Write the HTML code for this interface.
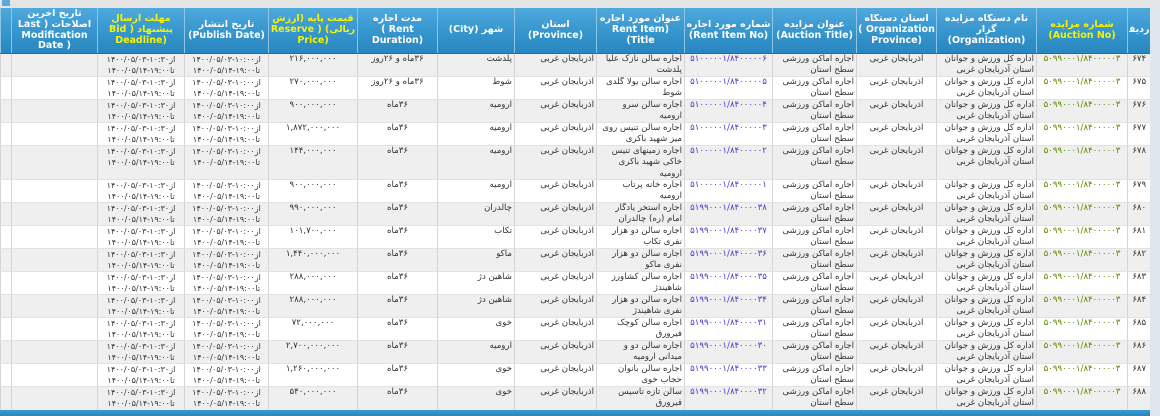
<!DOCTYPE html>
<html><head><meta charset="utf-8"><style>
body{margin:0;width:1160px;height:416px;overflow:hidden;background:#e9eef2;font-family:"DejaVu Sans","Liberation Sans",sans-serif;}
.top{position:absolute;left:0;top:0;width:1160px;height:8px;background:#e4e4e4;}
.top i{position:absolute;left:2px;top:0;width:8px;height:6px;background:#5aa9d8;}
.wrap{position:absolute;left:0;top:8px;width:1150px;height:402px;overflow:hidden;}
table{border-collapse:collapse;table-layout:fixed;width:1150px;direction:rtl;}
th{height:45px;background:linear-gradient(#4fa9dc 0%,#3595cd 55%,#2a86c0 100%);color:#fff;font-size:9.5px;font-weight:bold;line-height:10.8px;border-left:1px solid #8cc6e8;border-bottom:1px solid #1f6fa3;padding:0 1px;text-align:center;overflow:hidden;}
th div{max-height:44px;overflow:hidden;}
th.y{color:#f5f500;}
td{font-size:8.6px;line-height:11.4px;color:#333;border-left:1px solid #d5d5d5;border-bottom:1px solid #e2e2e2;vertical-align:top;padding:0 2px;text-align:right;overflow:hidden;}
td div{overflow:hidden;}
tr.g td{background:#efefef;}
tr.w td{background:#fff;}
td.c{text-align:center;}
td.nw{white-space:nowrap;}
td.an{color:#5d8a00;}
td.rn{color:#5533cc;}
td.d{font-size:8px;white-space:nowrap;text-align:center;padding:0;}
.bot{position:absolute;left:0;top:410px;width:1150px;height:6px;background:linear-gradient(#3b9ad2,#2b84bd);}
.side{position:absolute;left:1150px;top:8px;width:10px;height:408px;background:#dfe7ee;}
</style></head><body>
<div class="top"><i></i></div>
<div class="side"></div>
<div class="wrap"><table id="t">
<colgroup>
<col style="width:23px"><col style="width:91px"><col style="width:100px"><col style="width:80px"><col style="width:84px"><col style="width:88px"><col style="width:88px"><col style="width:82px"><col style="width:77px"><col style="width:80px"><col style="width:89px"><col style="width:84px"><col style="width:87px"><col style="width:86px"><col style="width:11px">
</colgroup>
<tr>
<th><div>ردیف</div></th>
<th class="y"><div>شماره مزایده<br>(Auction No)</div></th>
<th><div>نام دستگاه مزایده گزار<br>(Organization)</div></th>
<th><div>استان دستگاه<br>Organization )<br>(Province</div></th>
<th><div>عنوان مزایده<br>(Auction Title)</div></th>
<th><div>شماره مورد اجاره<br>(Rent Item No)</div></th>
<th><div>عنوان مورد اجاره<br>(Rent Item Title)</div></th>
<th><div>استان<br>(Province)</div></th>
<th><div>شهر (City)</div></th>
<th><div>مدت اجاره<br>Rent )<br>(Duration</div></th>
<th class="y"><div>قیمت پایه (ارزش<br>ریالی) ( Reserve<br>(Price</div></th>
<th><div>تاریخ انتشار<br>(Publish Date)</div></th>
<th class="y"><div>مهلت ارسال<br>پیشنهاد ( Bid<br>(Deadline</div></th>
<th><div>تاریخ آخرین<br>اصلاحات ( Last<br>Modification<br>( Date</div></th>
<th></th>
</tr>
</table></div>
<div class="bot"></div>
<script>
var rows=[
["۶۷۴","۵۱۰۰۰۰۰۱/۸۴۰۰۰۰۰۶","اجاره سالن نازک علیا پلدشت","پلدشت","۳۶ماه و ۲۶روز","۲۱۶,۰۰۰,۰۰۰",23],
["۶۷۵","۵۱۰۰۰۰۰۱/۸۴۰۰۰۰۰۵","اجاره سالن یولا گلدی شوط","شوط","۳۶ماه و ۲۶روز","۲۷۰,۰۰۰,۰۰۰",23],
["۶۷۶","۵۱۰۰۰۰۰۱/۸۴۰۰۰۰۰۴","اجاره سالن سرو ارومیه","ارومیه","۳۶ماه","۹۰۰,۰۰۰,۰۰۰",23],
["۶۷۷","۵۱۰۰۰۰۰۱/۸۴۰۰۰۰۰۳","اجاره سالن تنیس روی میز شهید باکری","ارومیه","۳۶ماه","۱,۸۷۲,۰۰۰,۰۰۰",23],
["۶۷۸","۵۱۰۰۰۰۰۱/۸۴۰۰۰۰۰۲","اجاره زمینهای تنیس خاکی شهید باکری ارومیه","ارومیه","۳۶ماه","۱۴۴,۰۰۰,۰۰۰",34],
["۶۷۹","۵۱۰۰۰۰۰۱/۸۴۰۰۰۰۰۱","اجاره خانه پرتاب ارومیه","ارومیه","۳۶ماه","۹۰۰,۰۰۰,۰۰۰",23],
["۶۸۰","۵۱۹۹۰۰۰۱/۸۴۰۰۰۰۳۸","اجاره استخر یادگار امام (ره) چالدران","چالدران","۳۶ماه","۹۹۰,۰۰۰,۰۰۰",23],
["۶۸۱","۵۱۹۹۰۰۰۱/۸۴۰۰۰۰۳۷","اجاره سالن دو هزار نفری تکاب","تکاب","۳۶ماه","۱۰۱,۷۰۰,۰۰۰",23],
["۶۸۲","۵۱۹۹۰۰۰۱/۸۴۰۰۰۰۳۶","اجاره سالن دو هزار نفری ماکو","ماکو","۳۶ماه","۱,۴۴۰,۰۰۰,۰۰۰",23],
["۶۸۳","۵۱۹۹۰۰۰۱/۸۴۰۰۰۰۳۵","اجاره سالن کشاورز شاهیندژ","شاهین دژ","۳۶ماه","۲۸۸,۰۰۰,۰۰۰",23],
["۶۸۴","۵۱۹۹۰۰۰۱/۸۴۰۰۰۰۳۴","اجاره سالن دو هزار نفری شاهیندژ","شاهین دژ","۳۶ماه","۲۸۸,۰۰۰,۰۰۰",23],
["۶۸۵","۵۱۹۹۰۰۰۱/۸۴۰۰۰۰۳۱","اجاره سالن کوچک فیرورق","خوی","۳۶ماه","۷۲,۰۰۰,۰۰۰",23],
["۶۸۶","۵۱۹۹۰۰۰۱/۸۴۰۰۰۰۳۰","اجاره سالن دو و میدانی ارومیه","ارومیه","۳۶ماه","۲,۷۰۰,۰۰۰,۰۰۰",23],
["۶۸۷","۵۱۹۹۰۰۰۱/۸۴۰۰۰۰۳۳","اجاره سالن بانوان حجاب خوی","خوی","۳۶ماه","۱,۲۶۰,۰۰۰,۰۰۰",23],
["۶۸۸","۵۱۹۹۰۰۰۱/۸۴۰۰۰۰۳۲","سالن تازه تاسیس فیرورق","خوی","۳۶ماه","۵۴۰,۰۰۰,۰۰۰",24]
];
var t=document.getElementById('t'),h='';
function dt(a,b){return 'از<bdi dir="ltr">'+a+'</bdi><br>تا<bdi dir="ltr">'+b+'</bdi>';}
rows.forEach(function(r,i){
var H=r[6]-1, s=' style="height:'+H+'px"';
function c(cls,txt){return '<td class="'+cls+'"><div'+s+'>'+txt+'</div></td>';}
h+='<tr class="'+(i%2?'w':'g')+'" style="height:'+r[6]+'px">'+
c('c nw',r[0])+
c('an c nw','۵۰۹۹۰۰۰۱/۸۴۰۰۰۰۰۳')+
c('','اداره کل ورزش و جوانان استان آذربایجان غربی')+
c('c nw','آذربایجان غربی')+
c('','اجاره اماکن ورزشی سطح استان')+
c('rn c nw',r[1])+
c('',r[2])+
c('nw','آذربایجان غربی')+
c('nw',r[3])+
c('c nw',r[4])+
c('c nw',r[5])+
c('d',dt('۱۴۰۰/۰۵/۰۳-۱۰:۰۰','۱۴۰۰/۰۵/۱۴-۱۹:۰۰'))+
c('d',dt('۱۴۰۰/۰۵/۰۳-۱۰:۳۰','۱۴۰۰/۰۵/۱۴-۱۹:۰۰'))+
c('','')+c('','')+'</tr>';
});
t.tBodies[0].insertAdjacentHTML('beforeend',h);
</script>
</body></html>
